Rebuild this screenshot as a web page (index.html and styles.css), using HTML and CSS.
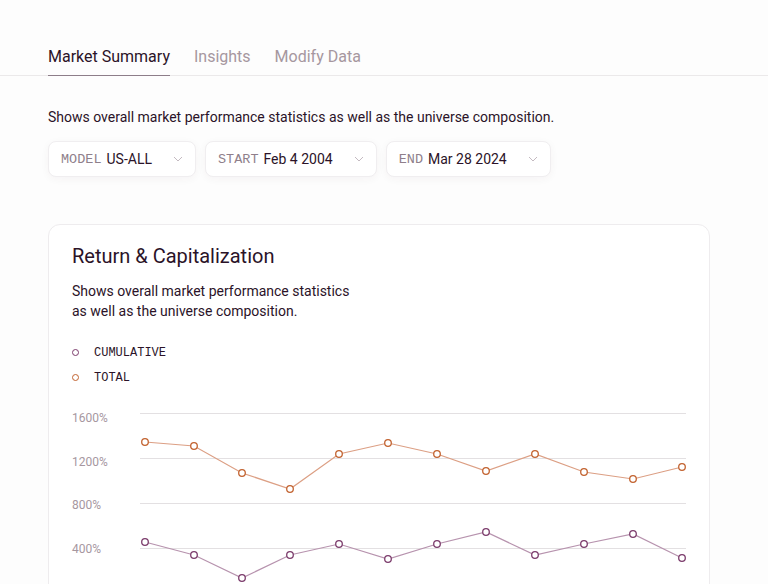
FILE: index.html
```html
<!DOCTYPE html>
<html lang="en">
<head>
<meta charset="utf-8">
<title>Market Summary</title>
<link rel="stylesheet" href="styles.css">
</head>
<body>
<nav class="tabs">
  <a class="tab active">Market Summary</a>
  <a class="tab">Insights</a>
  <a class="tab">Modify Data</a>
</nav>
<main class="main">
  <p class="intro">Shows overall market performance statistics as well as the universe composition.</p>
  <div class="filters">
    <button class="select"><span class="label">MODEL</span><span class="value">US-ALL</span><svg class="chev" width="10" height="6" viewBox="0 0 10 6"><path d="M1 1l4 4 4-4" fill="none" stroke="#c4bac1" stroke-width="1"/></svg></button>
    <button class="select"><span class="label">START</span><span class="value">Feb 4 2004</span><svg class="chev" width="10" height="6" viewBox="0 0 10 6"><path d="M1 1l4 4 4-4" fill="none" stroke="#c4bac1" stroke-width="1"/></svg></button>
    <button class="select"><span class="label">END</span><span class="value">Mar 28 2024</span><svg class="chev" width="10" height="6" viewBox="0 0 10 6"><path d="M1 1l4 4 4-4" fill="none" stroke="#c4bac1" stroke-width="1"/></svg></button>
  </div>
  <section class="card">
    <h2 class="card-title">Return &amp; Capitalization</h2>
    <p class="card-desc">Shows overall market performance statistics<br>as well as the universe composition.</p>
    <ul class="legend">
      <li><span class="dot dot-cum"></span>CUMULATIVE</li>
      <li><span class="dot dot-tot"></span>TOTAL</li>
    </ul>
    <svg class="chart" width="614" height="200" viewBox="0 0 614 200">
      <g stroke="#e3e0e2" stroke-width="1">
        <line x1="68" y1="8.5" x2="614" y2="8.5"/>
        <line x1="68" y1="53.5" x2="614" y2="53.5"/>
        <line x1="68" y1="98.5" x2="614" y2="98.5"/>
        <line x1="68" y1="143.5" x2="614" y2="143.5"/>
        <line x1="68" y1="188.5" x2="614" y2="188.5"/>
      </g>
      <g class="axis">
        <text x="0" y="16.5">1600%</text>
        <text x="0" y="60.5">1200%</text>
        <text x="0" y="103.5">800%</text>
        <text x="0" y="147.5">400%</text>
      </g>
      <polyline fill="none" stroke="#dc9f84" stroke-width="1.2" points="73,37 122,41 170,68 218,84 267,49 316,38 365,49 414,66 463,49 512,67 561,74 610,62"/>
      <polyline fill="none" stroke="#b793ae" stroke-width="1.2" points="73,137 122,150 170,173 218,150 267,139 316,154 365,139 414,127 463,150 512,139 561,129 610,153"/>
      <g fill="#fff" stroke="#c2622f" stroke-width="1.3">
        <circle cx="73" cy="37" r="3.3"/><circle cx="122" cy="41" r="3.3"/><circle cx="170" cy="68" r="3.3"/><circle cx="218" cy="84" r="3.3"/><circle cx="267" cy="49" r="3.3"/><circle cx="316" cy="38" r="3.3"/><circle cx="365" cy="49" r="3.3"/><circle cx="414" cy="66" r="3.3"/><circle cx="463" cy="49" r="3.3"/><circle cx="512" cy="67" r="3.3"/><circle cx="561" cy="74" r="3.3"/><circle cx="610" cy="62" r="3.3"/>
      </g>
      <g fill="#fff" stroke="#7b3b6b" stroke-width="1.3">
        <circle cx="73" cy="137" r="3.3"/><circle cx="122" cy="150" r="3.3"/><circle cx="170" cy="173" r="3.3"/><circle cx="218" cy="150" r="3.3"/><circle cx="267" cy="139" r="3.3"/><circle cx="316" cy="154" r="3.3"/><circle cx="365" cy="139" r="3.3"/><circle cx="414" cy="127" r="3.3"/><circle cx="463" cy="150" r="3.3"/><circle cx="512" cy="139" r="3.3"/><circle cx="561" cy="129" r="3.3"/><circle cx="610" cy="153" r="3.3"/>
      </g>
    </svg>
  </section>
</main>
</body>
</html>
```

FILE: styles.css
```css
* { box-sizing: border-box; }
html, body { margin: 0; padding: 0; }
body {
  background: #fdfdfd;
  color: #2b1328;
  font-family: Roboto, "Liberation Sans", sans-serif;
  overflow: hidden;
  height: 584px;
}
.tabs {
  display: flex;
  gap: 24px;
  padding: 45px 48px 0;
  border-bottom: 1px solid #ebe9ea;
}
.tab {
  font-size: 16px;
  line-height: 24px;
  padding-bottom: 6px;
  color: #a6979f;
  margin-bottom: -1px;
  border-bottom: 1.5px solid transparent;
  cursor: pointer;
}
.tab.active {
  color: #2b1328;
  border-bottom-color: #8d7d89;
}
.main {
  padding: 31px 48px 0;
}
.intro {
  margin: 0;
  font-size: 14px;
  line-height: 20px;
}
.filters {
  display: flex;
  gap: 9px;
  margin-top: 14px;
}
.select {
  display: flex;
  align-items: center;
  height: 36px;
  padding: 0 12px;
  background: #fff;
  border: 1px solid #f0eef0;
  border-radius: 8px;
  box-shadow: 0 2px 8px rgba(60, 30, 55, 0.045);
  font-family: Roboto, "Liberation Sans", sans-serif;
  font-size: 14px;
  color: #2b1328;
}
.select .label {
  font-family: "Liberation Mono", monospace;
  font-size: 13.5px;
  color: #8f7f8b;
  margin-right: 5px;
}
.select .value { margin-right: 21px; }
.chev { display: block; }
.card {
  margin-top: 47px;
  width: 662px;
  height: 400px;
  background: #fff;
  border: 1px solid #eeecee;
  border-radius: 12px;
  padding: 17px 23px 0;
}
.card-title {
  margin: 0;
  font-size: 20px;
  line-height: 28px;
  font-weight: 400;
}
.card-desc {
  margin: 11px 0 0;
  font-size: 14px;
  line-height: 20px;
}
.legend {
  list-style: none;
  margin: 19px 0 0;
  padding: 0;
}
.legend li {
  display: flex;
  align-items: center;
  height: 25px;
  font-family: "Liberation Mono", monospace;
  font-size: 12px;
}
.dot {
  width: 7px;
  height: 7px;
  border-radius: 50%;
  border: 1.3px solid;
  margin: 0 15px 0 0;
}
.dot-cum { border-color: #7b3b6b; }
.dot-tot { border-color: #c2622f; }
.chart {
  display: block;
  margin-top: 15px;
  overflow: visible;
}
.axis text {
  font-family: Roboto, "Liberation Sans", sans-serif;
  font-size: 12px;
  fill: #a6979f;
}
```
